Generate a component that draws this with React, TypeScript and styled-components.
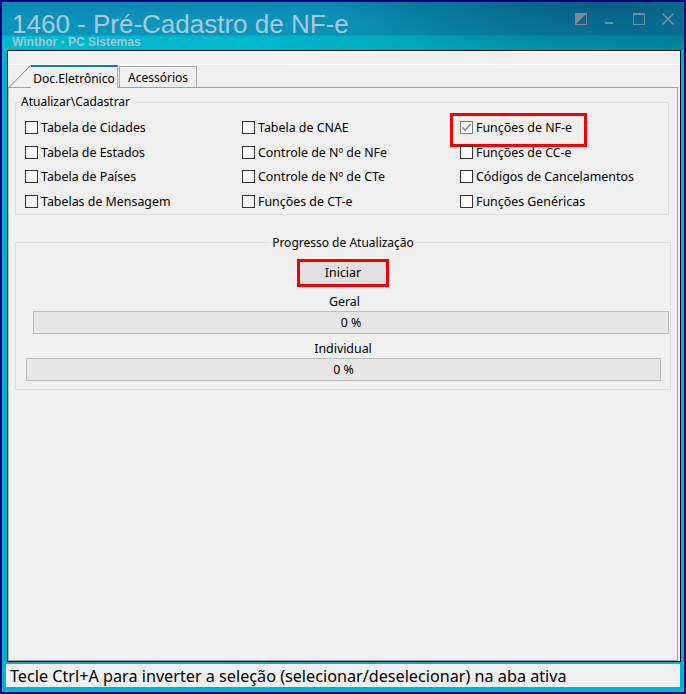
import React from "react";
import styled, { createGlobalStyle, css } from "styled-components";

const Global = createGlobalStyle`
  html, body { margin: 0; padding: 0; background: #00007a; }
  * { box-sizing: border-box; }
`;

const uiFont = `"Noto Sans", "Open Sans", sans-serif`;

const Window = styled.div`
  width: 686px;
  height: 694px;
  border: 2px solid #00007a;
  background: #00b4cc;
  display: flex;
  flex-direction: column;
  overflow: hidden;
`;

const TitleBar = styled.div`
  position: relative;
  height: 48px;
  flex: none;
  display: flex;
  align-items: flex-start;
  justify-content: space-between;
  padding: 0 6px 0 10px;
  background:
    radial-gradient(ellipse 260px 60px at 600px 0px, rgba(0, 70, 100, 0.55), rgba(0, 70, 100, 0) 100%),
    radial-gradient(ellipse 420px 80px at 680px 40px, rgba(0, 60, 90, 0.35), rgba(0, 60, 90, 0) 100%),
    linear-gradient(180deg, #0d86ae 0px, #0b94bb 18px, #0a96bc 33px, #00b7cb 34px, #00b7cb 48px);
`;

const TitleText = styled.div`
  display: flex;
  flex-direction: column;
  padding-top: 10px;
`;

const Caption = styled.div`
  font-family: "Liberation Sans", Arial, sans-serif;
  font-size: 26px;
  line-height: 24px;
  color: #a9c9dc;
`;

const SubCaption = styled.div`
  font-family: "Liberation Sans", Arial, sans-serif;
  font-weight: bold;
  font-size: 12px;
  line-height: 13px;
  color: #a6c4d6;
  margin-top: 0;
`;

const Controls = styled.div`
  display: flex;
  gap: 17px;
  padding-top: 11px;
  padding-right: 4px;
`;

const ControlIcon = styled.svg`
  width: 12px;
  height: 12px;
  display: block;
`;

const Client = styled.div`
  flex: none;
  height: 612px;
  margin: 0 3px 0 5px;
  border: 1px solid #0e0e0e;
  background: #f0f0f0;
  display: flex;
  flex-direction: column;
`;

const TopStrip = styled.div`
  height: 14px;
  flex: none;
  border-bottom: 1px solid #ffffff;
`;

const TabRow = styled.div`
  height: 22px;
  flex: none;
  display: flex;
  align-items: flex-end;
  position: relative;
  z-index: 1;
`;

const Slant = styled.svg`
  width: 23px;
  height: 23px;
  display: block;
  margin-bottom: -1px;
`;

const Tab = styled.div<{ $active?: boolean }>`
  font-family: ${uiFont};
  font-size: 12px;
  color: #000;
  display: flex;
  align-items: center;
  justify-content: center;
  border: 1px solid #a8a8a8;
  border-bottom: none;
  background: #f0f0f0;
  padding-top: 1px;
  ${(p) =>
    p.$active
      ? css`
          width: 87px;
          height: 23px;
          margin-bottom: -1px;
          border-top: 2px solid #0a78d4;
          border-left: none;
        `
      : css`
          width: 78px;
          height: 21px;
          margin-left: 1px;
        `}
`;

const TabPage = styled.div`
  flex: 1;
  margin-right: 2px;
  border-top: 1px solid #a0a0a0;
  border-right: 1px solid #a0a0a0;
  border-bottom: 1px solid #a0a0a0;
  border-left: 1px solid #b8b8b8;
  padding: 6px 8px 0 6px;
  display: flex;
  flex-direction: column;
`;

const Group = styled.fieldset<{ $center?: boolean; $mr?: number }>`
  margin: 0 ${(p) => p.$mr ?? 0}px 0 0;
  padding: 0;
  border: 1px solid #dcdcdc;
  min-width: 0;
  ${(p) =>
    p.$center &&
    css`
      text-align: center;
    `}
`;

const Legend = styled.legend<{ $center?: boolean }>`
  font-family: ${uiFont};
  font-size: 12px;
  line-height: 16px;
  color: #000;
  padding: 0 1px;
  margin-left: ${(p) => (p.$center ? "auto" : "4px")};
  margin-right: ${(p) => (p.$center ? "auto" : "0")};
`;

const CheckGrid = styled.div`
  display: grid;
  grid-template-columns: 217px 218px 1fr;
  grid-auto-rows: 24.7px;
  padding: 5px 0 0 9px;
`;

const CheckItem = styled.label<{ $marked?: boolean }>`
  position: relative;
  display: flex;
  align-items: center;
  gap: 3px;
  font-family: ${uiFont};
  font-size: 12.4px;
  color: #000;
  white-space: nowrap;
  ${(p) =>
    p.$marked &&
    css`
      &::after {
        content: "";
        position: absolute;
        left: -10px;
        top: 50%;
        margin-top: -14px;
        width: 131px;
        height: 28px;
        border: 3px solid #f00000;
      }
    `}
`;

const Box = styled.span<{ $checked?: boolean }>`
  width: 13px;
  height: 13px;
  flex: none;
  border: 1px solid #333333;
  background: #ffffff;
  display: flex;
  align-items: center;
  justify-content: center;
  ${(p) =>
    p.$checked &&
    css`
      border-color: #7a7a7a;
    `}
`;

const ProgressBody = styled.div`
  display: flex;
  flex-direction: column;
  align-items: stretch;
  padding: 8px 0 8px 0;
`;

const StartButton = styled.button`
  align-self: center;
  width: 92px;
  height: 28px;
  border: 3px solid #f00000;
  background: #e1e1e1;
  font-family: ${uiFont};
  font-size: 12.4px;
  color: #000;
  padding: 0;
  cursor: default;
`;

const BarLabel = styled.div<{ $shift?: number }>`
  font-family: ${uiFont};
  font-size: 12.4px;
  line-height: 16px;
  color: #000;
  text-align: center;
  margin-left: ${(p) => p.$shift ?? 0}px;
  margin-top: 7px;
`;

const Bar = styled.div<{ $left: number; $right: number }>`
  height: 23px;
  margin: 1px ${(p) => p.$right}px 0 ${(p) => p.$left}px;
  border: 1px solid #bcbcbc;
  background: #e6e6e6;
  display: flex;
  align-items: center;
  justify-content: center;
  font-family: ${uiFont};
  font-size: 12.4px;
  color: #000;
`;

const Spacer = styled.div`
  height: 20px;
  flex: none;
`;

const StatusBar = styled.div`
  flex: none;
  height: 23px;
  margin: 2px 4px 0 4px;
  background: #f0f0f0;
  border-left: 1px solid #ffffff;
  display: flex;
  align-items: center;
  padding-left: 3px;
  font-family: ${uiFont};
  font-size: 16.2px;
  color: #000;
  white-space: nowrap;
`;

const ctrlColor = "#7c8a92";

const leftColumn = ["Tabela de Cidades", "Tabela de Estados", "Tabela de Países", "Tabelas de Mensagem"];
const midColumn = ["Tabela de CNAE", "Controle de Nº de NFe", "Controle de Nº de CTe", "Funções de CT-e"];
const rightColumn = ["Funções de NF-e", "Funções de CC-e", "Códigos de Cancelamentos", "Funções Genéricas"];

type Opt = { label: string; checked?: boolean; marked?: boolean };

// Options are laid out row by row across the three columns.
const options: Opt[] = [];
for (let i = 0; i < 4; i++) {
  options.push({ label: leftColumn[i] });
  options.push({ label: midColumn[i] });
  options.push({ label: rightColumn[i], checked: i === 0, marked: i === 0 });
}

function Check({ label, checked, marked }: Opt) {
  return (
    <CheckItem $marked={marked}>
      <Box $checked={checked}>
        {checked && (
          <svg width="11" height="11" viewBox="0 0 11 11">
            <path d="M1.5 5.5 L4.2 8.2 L9.5 2" fill="none" stroke="#7a7a7a" strokeWidth="1.3" />
          </svg>
        )}
      </Box>
      {label}
    </CheckItem>
  );
}

export default function App() {
  return (
    <>
      <Global />
      <Window>
        <TitleBar>
          <TitleText>
            <Caption>1460 - Pré-Cadastro de NF-e</Caption>
            <SubCaption>Winthor - PC Sistemas</SubCaption>
          </TitleText>
          <Controls>
            <ControlIcon viewBox="0 0 12 12">
              <rect x="0.5" y="0.5" width="11" height="11" fill="none" stroke={ctrlColor} />
              <path d="M0 12 L12 0 L0 0 Z" fill={ctrlColor} />
            </ControlIcon>
            <ControlIcon viewBox="0 0 12 12">
              <rect x="1" y="9" width="8" height="2" fill={ctrlColor} />
            </ControlIcon>
            <ControlIcon viewBox="0 0 12 12">
              <rect x="0.5" y="0.5" width="11" height="11" fill="none" stroke={ctrlColor} />
              <rect x="0" y="0" width="12" height="2" fill={ctrlColor} />
            </ControlIcon>
            <ControlIcon viewBox="0 0 12 12">
              <path d="M0.5 0.5 L11.5 11.5 M11.5 0.5 L0.5 11.5" stroke={ctrlColor} strokeWidth="1.6" />
            </ControlIcon>
          </Controls>
        </TitleBar>

        <Client>
          <TopStrip />
          <TabRow>
            <Slant viewBox="0 0 23 23">
              <path d="M0.5 23 L22.5 0.5" stroke="#8c8c8c" strokeWidth="1" fill="none" />
            </Slant>
            <Tab $active>Doc.Eletrônico</Tab>
            <Tab>Acessórios</Tab>
          </TabRow>
          <TabPage>
            <Group>
              <Legend>Atualizar\Cadastrar</Legend>
              <CheckGrid>
                {options.map((o) => (
                  <Check key={o.label} {...o} />
                ))}
              </CheckGrid>
            </Group>
            <Spacer />
            <Group $center $mr={-2}>
              <Legend $center>Progresso de Atualização</Legend>
              <ProgressBody>
                <StartButton>Iniciar</StartButton>
                <BarLabel $shift={3}>Geral</BarLabel>
                <Bar $left={17} $right={1}>0 %</Bar>
                <BarLabel $shift={0}>Individual</BarLabel>
                <Bar $left={10} $right={9}>0 %</Bar>
              </ProgressBody>
            </Group>
          </TabPage>
        </Client>

        <StatusBar>Tecle Ctrl+A para inverter a seleção (selecionar/deselecionar) na aba ativa</StatusBar>
      </Window>
    </>
  );
}
